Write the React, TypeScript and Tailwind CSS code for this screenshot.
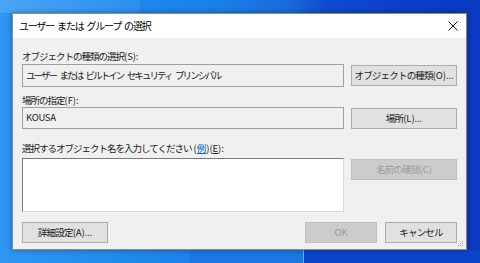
import React from "react";

const font = {
  fontFamily: '"Noto Sans CJK JP", "Noto Sans", sans-serif',
};

function L({ children }: { children: React.ReactNode }) {
  return <span className="tracking-[-0.1px]">{children}</span>;
}

function Btn({
  children,
  w,
  disabled,
  className = "",
}: {
  children: React.ReactNode;
  w: string;
  disabled?: boolean;
  className?: string;
}) {
  return (
    <div
      className={
        "flex items-center justify-center h-[21px] border text-[9.5px] tracking-[-0.8px] leading-none whitespace-nowrap " +
        w +
        " " +
        (disabled
          ? "bg-[#cccccc] border-[#bfbfbf] text-[#9a9a9a]"
          : "bg-[#e1e1e1] border-[#adadad] text-[#1a1a1a]") +
        " " +
        className
      }
    >
      {children}
    </div>
  );
}

export default function App() {
  return (
    <div
      className="relative w-[480px] h-[263px] overflow-hidden bg-[linear-gradient(90deg,#2f96f2_0%,#1f8bee_25%,#1b7fe8_45%,#1a6bdc_60%,#0f4bcf_68%,#0b3fc6_85%,#0a3ac2_100%)]"
      style={font}
    >
      {/* wallpaper accents */}
      <div className="absolute left-0 top-0 w-[140px] h-[13px] bg-[linear-gradient(100deg,#4aa6f4,#2b8ff0)]" />
      <div className="absolute left-[190px] top-[250px] w-[113px] h-[13px] bg-[#1b78e2]" />
      <div className="absolute left-[303px] top-[250px] w-[1px] h-[13px] bg-[#5eb2ff]" />
      <div className="absolute left-[304px] top-[250px] w-[176px] h-[13px] bg-[#0b45cc]" />

      <div className="relative ml-[12px] mt-[13px] w-[455px] h-[237px] border border-[#8a8a8a] bg-[#f0f0f0] shadow-[0_0_6px_rgba(0,0,0,0.35)] flex flex-col">
        {/* title bar */}
        <div className="h-[24px] bg-white flex items-center justify-between pl-[6px] pr-[7px]">
          <span className="text-[10px] tracking-[-1.2px] [word-spacing:2px] text-black leading-none whitespace-nowrap">
            ユーザー または グループ の選択
          </span>
          <svg width="10" height="10" viewBox="0 0 10 10" className="mr-[1px]">
            <path d="M0.5 0.5 L9.5 9.5 M9.5 0.5 L0.5 9.5" stroke="#111" strokeWidth="1" />
          </svg>
        </div>

        {/* body */}
        <div className="flex-1 flex flex-col px-[9px] pt-[12px] text-[9.5px] tracking-[-1px] text-[#1a1a1a]">
          <div className="h-[12px] leading-[12px] whitespace-nowrap">
            オブジェクトの種類の選択<L>(S):</L>
          </div>
          <div className="flex items-start gap-[7px] mt-[2px]">
            <div className="flex-1 h-[23px] border border-[#a0a0a0] bg-[#f0f0f0] flex items-center pl-[3px] leading-none whitespace-nowrap tracking-[-1.9px] [word-spacing:3px]">
              ユーザー または ビルトイン セキュリティ プリンシパル
            </div>
            <Btn w="w-[106px]" className="mt-[1px]">
              オブジェクトの種類<L>(O)...</L>
            </Btn>
          </div>

          <div className="h-[12px] leading-[12px] mt-[7px] whitespace-nowrap">
            場所の指定<L>(F):</L>
          </div>
          <div className="flex items-start gap-[7px] mt-[1px]">
            <div className="flex-1 h-[22px] border border-[#a0a0a0] bg-[#f0f0f0] flex items-center pl-[3px] leading-none tracking-[-0.3px]">
              KOUSA
            </div>
            <Btn w="w-[106px]" className="mt-[1px]">
              場所<L>(L)...</L>
            </Btn>
          </div>

          <div className="h-[12px] leading-[12px] mt-[13px] whitespace-nowrap">
            選択するオブジェクト名を入力してください<span className="tracking-[0px]"> (</span>
            <span className="text-[#0066cc] underline tracking-[0px]">例</span>
            <L>
              )(<span className="underline">E</span>):
            </L>
          </div>
          <div className="flex items-start gap-[7px] mt-[4px]">
            <div className="flex-1 h-[54px] bg-white border-t border-l border-[#7a7a7a] border-r border-b border-r-[#d9d9d9] border-b-[#d9d9d9]" />
            <Btn w="w-[106px]" disabled className="mt-[1px] h-[20px]">
              名前の確認<L>(C)</L>
            </Btn>
          </div>

          <div className="flex items-center mt-[10px]">
            <Btn w="w-[86px]" className="h-[20px]">
              詳細設定<L>(A)...</L>
            </Btn>
            <div className="flex-1" />
            <Btn w="w-[72px]" disabled className="h-[20px] tracking-[0px]">
              OK
            </Btn>
            <Btn w="w-[72px]" className="h-[20px] ml-[8px]">
              キャンセル
            </Btn>
          </div>
        </div>

        {/* resize grip */}
        <svg
          width="7"
          height="7"
          viewBox="0 0 7 7"
          className="absolute right-[2px] bottom-[2px]"
        >
          <rect x="5" y="1" width="1" height="1" fill="#9a9a9a" />
          <rect x="3" y="3" width="1" height="1" fill="#9a9a9a" />
          <rect x="5" y="3" width="1" height="1" fill="#9a9a9a" />
          <rect x="1" y="5" width="1" height="1" fill="#9a9a9a" />
          <rect x="3" y="5" width="1" height="1" fill="#9a9a9a" />
          <rect x="5" y="5" width="1" height="1" fill="#9a9a9a" />
        </svg>
      </div>
    </div>
  );
}
